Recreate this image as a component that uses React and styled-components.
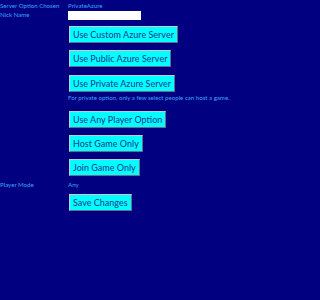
import React from 'react';
import styled, { createGlobalStyle } from 'styled-components';

const GlobalStyle = createGlobalStyle`
  html, body {
    margin: 0;
    padding: 0;
    background: #000080;
    height: 100%;
  }
  body {
    font-family: Lato, 'Open Sans', sans-serif;
  }
`;

const Page = styled.div`
  display: grid;
  grid-template-columns: 68px 1fr;
  align-items: start;
  padding-top: 2px;
`;

const Label = styled.div`
  color: #3a9cf5;
  font-size: 6.1px;
  font-weight: 500;
  line-height: 7px;
  margin-top: ${(p) => p.$top || 0}px;
  margin-bottom: ${(p) => p.$gap || 0}px;
`;

const Value = styled(Label)``;

const Controls = styled.div`
  display: flex;
  flex-direction: column;
  align-items: flex-start;
`;

const NickInput = styled.input`
  width: 73px;
  height: 9px;
  box-sizing: border-box;
  border: none;
  background: #fff;
  padding: 0;
  margin: 0 0 6px;
`;

const Button = styled.button`
  font-family: Lato, 'Open Sans', sans-serif;
  font-size: 9px;
  font-weight: 500;
  color: #1a4396;
  background: #00ffff;
  box-sizing: border-box;
  border: 1px solid;
  border-color: #c8c8dc #6a6a8a #6a6a8a #c8c8dc;
  height: 17px;
  padding: 0 3px;
  margin: ${(p) => p.$top || 0}px 0 0 1px;
  line-height: 15px;
  cursor: pointer;
`;

const Note = styled(Label)`
  margin-top: 2px;
`;

export default function App() {
  return (
    <>
      <GlobalStyle />
      <Page>
        <Label $gap={2}>Server Option Chosen</Label>
        <Value $gap={2}>PrivateAzure</Value>
        <Label>Nick Name</Label>
        <Controls>
          <NickInput type="text" />
          <Button>Use Custom Azure Server</Button>
          <Button $top={7}>Use Public Azure Server</Button>
          <Button $top={8}>Use Private Azure Server</Button>
          <Note>For private option, only a few select people can host a game.</Note>
          <Button $top={10}>Use Any Player Option</Button>
          <Button $top={7}>Host Game Only</Button>
          <Button $top={7}>Join Game Only</Button>
        </Controls>
        <Label $top={5}>Player Mode</Label>
        <Value $top={5}>Any</Value>
        <div />
        <Controls>
          <Button $top={6}>Save Changes</Button>
        </Controls>
      </Page>
    </>
  );
}
